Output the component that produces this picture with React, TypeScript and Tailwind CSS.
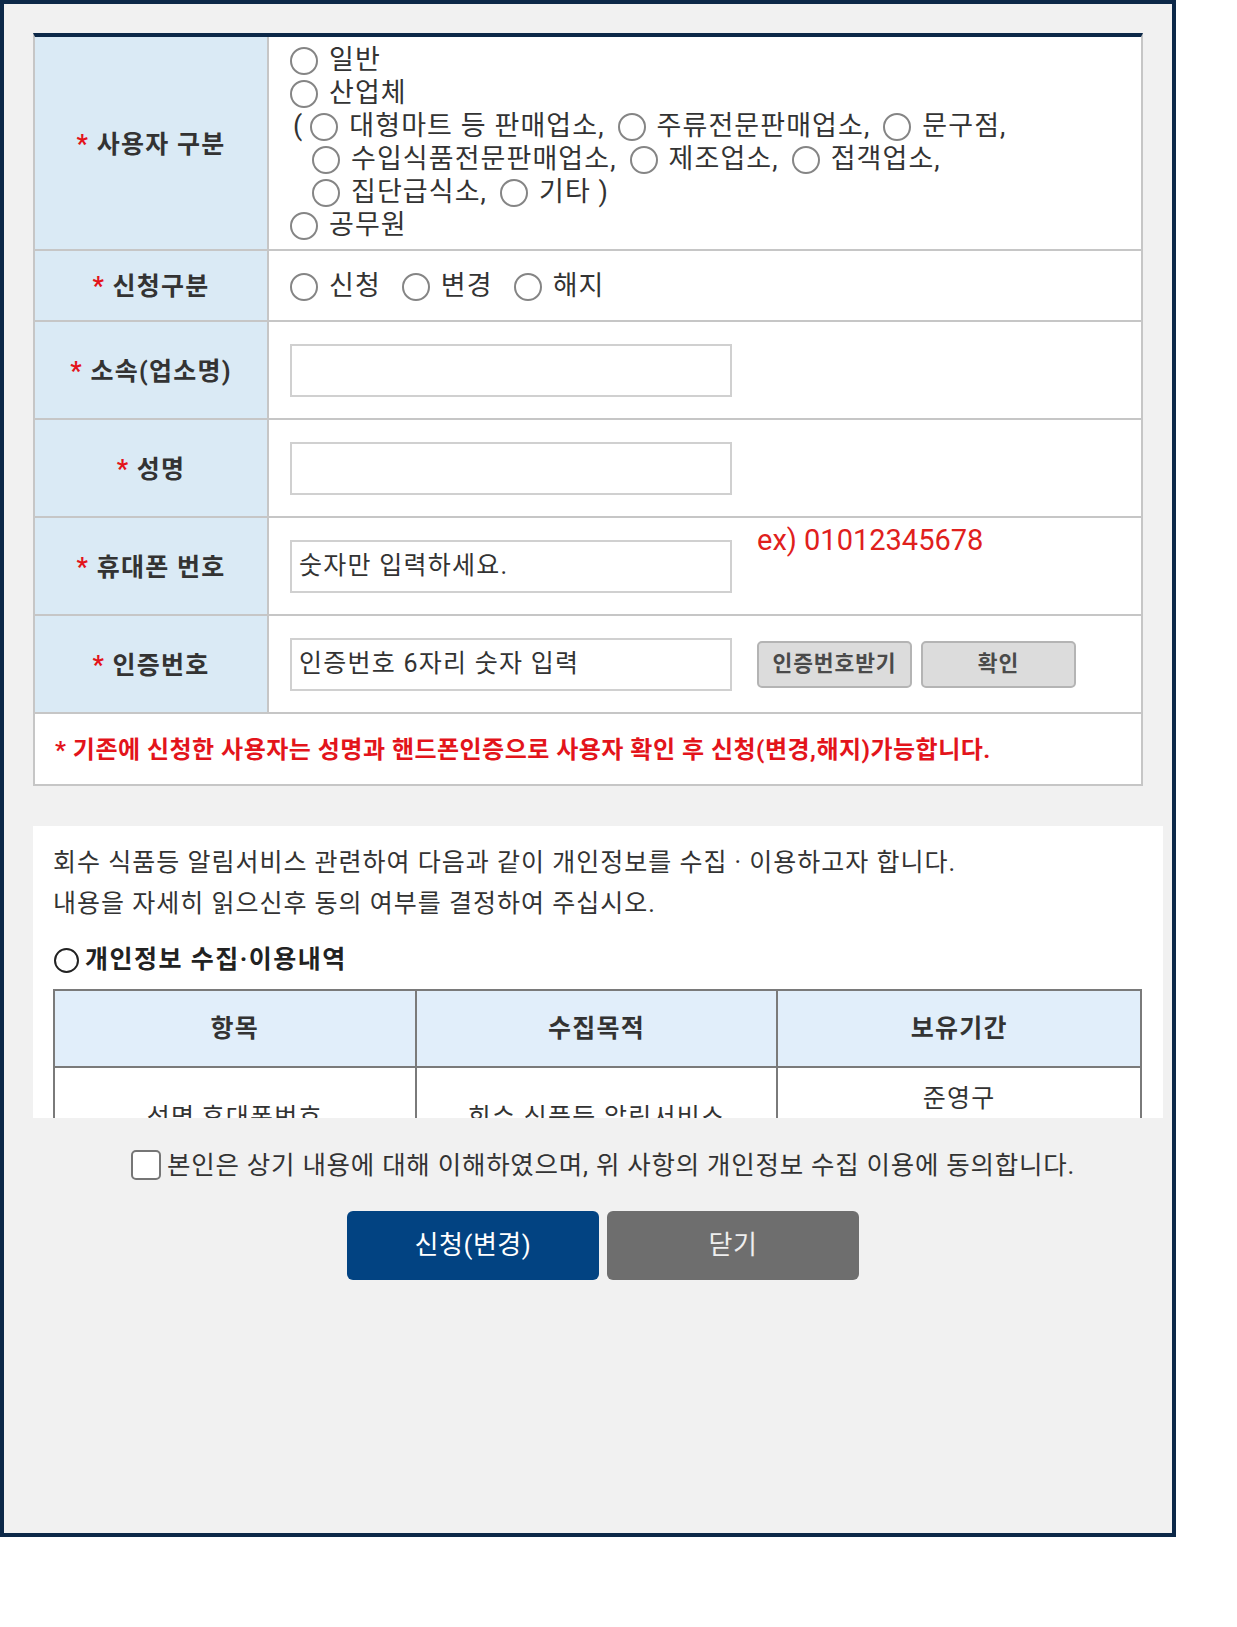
import React from "react";

const Radio = () => (
  <span className="inline-block w-[28px] h-[28px] rounded-full border-2 border-[#858585] bg-white shrink-0" />
);

const Opt = ({ label }: { label: string }) => (
  <span className="flex items-center gap-[11px] whitespace-pre">
    <Radio />
    <span>{label}</span>
  </span>
);

const Label = ({ text, h }: { text: string; h: string }) => (
  <div
    className={`w-[234px] shrink-0 border-r-2 border-[#c6c6c6] bg-[#daeaf5] flex items-center justify-center pt-[3px] text-[25px] tracking-[0.05em] font-bold text-[#333] ${h}`}
  >
    <span className="whitespace-pre">
      <span className="text-[#e3141b]">*</span> {text}
    </span>
  </div>
);

const Input = ({ value }: { value?: string }) => (
  <div className="w-[442px] h-[53px] border-2 border-[#d0d0d0] bg-white flex items-center pl-[7px] text-[25px] tracking-[0.05em] text-[#333] shrink-0">
    {value}
  </div>
);

export default function App() {
  return (
    <div className="min-h-[1627px] bg-white font-[family-name:Roboto,'Noto_Sans_CJK_KR',sans-serif] text-[#333]">
      <div className="w-[1176px] h-[1537px] border-[4px] border-[#0c2848] bg-[#f1f1f1] pt-[29px] pl-[29px] overflow-hidden">
        {/* form table */}
        <div className="w-[1110px] border-t-[4px] border-x-2 border-b-2 border-[#c6c6c6] border-t-[#0c2848] bg-white">
          {/* row 1 */}
          <div className="flex border-b-2 border-[#c6c6c6]">
            <Label text="사용자 구분" h="h-[212px]" />
            <div className="flex-1 py-[7px] text-[27px] tracking-[0.04em] leading-none">
              <div className="h-[33px] flex items-center pl-[21px]">
                <Opt label="일반" />
              </div>
              <div className="h-[33px] flex items-center pl-[21px]">
                <Opt label="산업체" />
              </div>
              <div className="h-[33px] flex items-center pl-[24px] gap-[13px]">
                <span className="flex items-center gap-[7px]">
                  <span>(</span>
                  <Opt label="대형마트 등 판매업소," />
                </span>
                <Opt label="주류전문판매업소," />
                <Opt label="문구점," />
              </div>
              <div className="h-[33px] flex items-center pl-[43px] gap-[13px]">
                <Opt label="수입식품전문판매업소," />
                <Opt label="제조업소," />
                <Opt label="접객업소," />
              </div>
              <div className="h-[33px] flex items-center pl-[43px] gap-[13px]">
                <Opt label="집단급식소," />
                <Opt label="기타 )" />
              </div>
              <div className="h-[33px] flex items-center pl-[21px]">
                <Opt label="공무원" />
              </div>
            </div>
          </div>
          {/* row 2 */}
          <div className="flex border-b-2 border-[#c6c6c6]">
            <Label text="신청구분" h="h-[69px]" />
            <div className="flex-1 flex items-center pl-[21px] pt-[2px] gap-[21px] text-[27px] tracking-[0.04em]">
              <Opt label="신청" />
              <Opt label="변경" />
              <Opt label="해지" />
            </div>
          </div>
          {/* row 3 */}
          <div className="flex border-b-2 border-[#c6c6c6]">
            <Label text="소속(업소명)" h="h-[96px]" />
            <div className="flex-1 flex items-center pl-[21px]">
              <Input />
            </div>
          </div>
          {/* row 4 */}
          <div className="flex border-b-2 border-[#c6c6c6]">
            <Label text="성명" h="h-[96px]" />
            <div className="flex-1 flex items-center pl-[21px]">
              <Input />
            </div>
          </div>
          {/* row 5 */}
          <div className="flex border-b-2 border-[#c6c6c6]">
            <Label text="휴대폰 번호" h="h-[96px]" />
            <div className="flex-1 flex items-center pl-[21px] gap-[25px]">
              <Input value="숫자만 입력하세요." />
              <span className="self-start text-[29px] leading-[33px] text-[#e0201c] mt-[6px]">
                ex) 01012345678
              </span>
            </div>
          </div>
          {/* row 6 */}
          <div className="flex border-b-2 border-[#c6c6c6]">
            <Label text="인증번호" h="h-[96px]" />
            <div className="flex-1 flex items-center pl-[21px]">
              <Input value="인증번호 6자리 숫자 입력" />
              <button className="ml-[25px] w-[155px] h-[47px] rounded-[5px] bg-[#dcdcdc] border-2 border-[#b4b4b4] text-[21.5px] tracking-[0.04em] font-bold text-[#4a4a4a]">
                인증번호받기
              </button>
              <button className="ml-[9px] w-[155px] h-[47px] rounded-[5px] bg-[#dcdcdc] border-2 border-[#b4b4b4] text-[21.5px] tracking-[0.04em] font-bold text-[#4a4a4a]">
                확인
              </button>
            </div>
          </div>
          {/* notice */}
          <div className="h-[70px] flex items-center pl-[20px] pt-[2px] text-[24px] tracking-[0.02em] font-bold text-[#e3141b] whitespace-nowrap">
            * 기존에 신청한 사용자는 성명과 핸드폰인증으로 사용자 확인 후 신청(변경,해지)가능합니다.
          </div>
        </div>

        {/* privacy box */}
        <div className="mt-[40px] w-[1130px] h-[292px] bg-white overflow-hidden px-[20px] pt-[16px]">
          <p className="text-[25px] tracking-[0.04em] leading-[41px] text-[#333] whitespace-nowrap">
            회수 식품등 알림서비스 관련하여 다음과 같이 개인정보를 수집 · 이용하고자 합니다.
          </p>
          <p className="text-[25px] tracking-[0.04em] leading-[41px] text-[#333] whitespace-nowrap">
            내용을 자세히 읽으신후 동의 여부를 결정하여 주십시오.
          </p>
          <div className="mt-[16px] h-[40px] flex items-center gap-[6px] text-[25px] tracking-[0.06em] font-bold text-[#222]">
            <span className="inline-block w-[25px] h-[25px] rounded-full border-2 border-[#222] ml-[1px]" />
            <span>개인정보 수집·이용내역</span>
          </div>
          <div className="mt-[9px] w-[1089px] border-2 border-[#7a7a7a]">
            <div className="grid grid-cols-3 bg-[#e1eefa] border-b-2 border-[#7a7a7a] h-[77px] text-[25px] tracking-[0.05em] font-bold text-[#333]">
              <div className="flex items-center justify-center border-r-2 border-[#7a7a7a]">항목</div>
              <div className="flex items-center justify-center border-r-2 border-[#7a7a7a]">수집목적</div>
              <div className="flex items-center justify-center">보유기간</div>
            </div>
            <div className="grid grid-cols-3 h-[100px] text-[25px] tracking-[0.05em] text-[#333]">
              <div className="flex items-center justify-center border-r-2 border-[#7a7a7a]">성명,휴대폰번호</div>
              <div className="flex items-center justify-center border-r-2 border-[#7a7a7a]">회수 식품등 알림서비스</div>
              <div className="flex flex-col items-center justify-center leading-[38px]">
                <span>준영구</span>
                <span>(서비스 해지시 파기)</span>
              </div>
            </div>
          </div>
        </div>

        {/* agree */}
        <div className="mt-[27px] w-[1140px] h-[40px] flex items-center justify-center gap-[6px] text-[25.5px] tracking-[0.03em] text-[#333]">
          <span className="inline-block w-[30px] h-[30px] rounded-[5px] border-2 border-[#767676] bg-white shrink-0" />
          <span className="whitespace-nowrap">본인은 상기 내용에 대해 이해하였으며, 위 사항의 개인정보 수집 이용에 동의합니다.</span>
        </div>

        {/* buttons */}
        <div className="mt-[26px] w-[1140px] flex justify-center gap-[8px]">
          <button className="w-[252px] h-[69px] rounded-[6px] bg-[#024382] text-white text-[26px] tracking-[0.02em]">
            신청(변경)
          </button>
          <button className="w-[252px] h-[69px] rounded-[6px] bg-[#6e6e6e] text-[#eeeeee] text-[26px] tracking-[0.02em]">
            닫기
          </button>
        </div>
      </div>
    </div>
  );
}
